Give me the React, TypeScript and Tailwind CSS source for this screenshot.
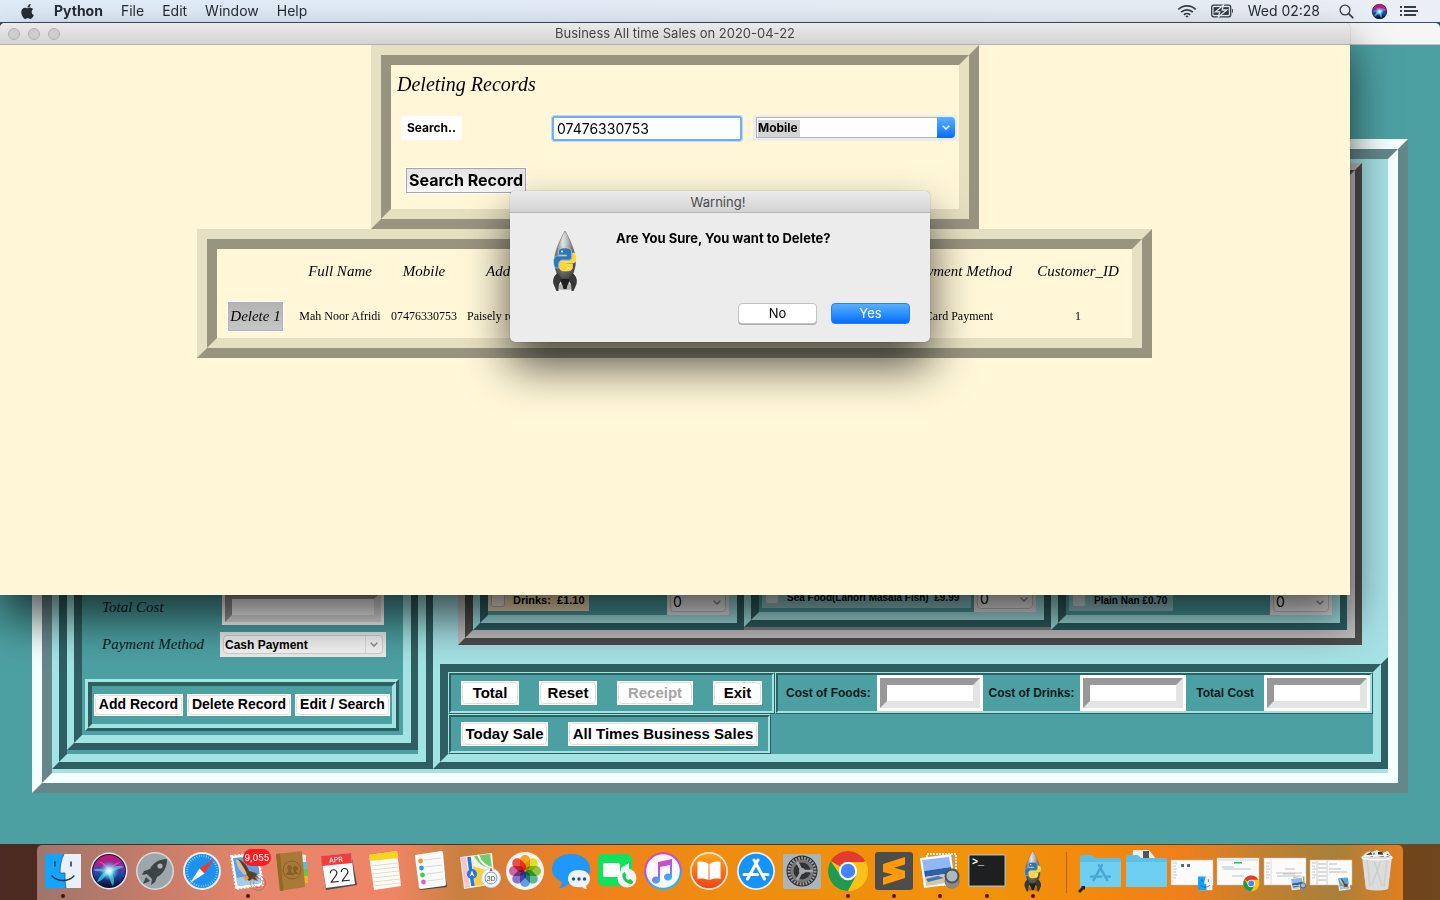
import React from "react";
import { FaApple } from "react-icons/fa";

/* ---------- raised frames ---------- */

type Kids = { children?: React.ReactNode; className?: string };

const CREAM_OUT = "border-t-[#e6e0c2] border-l-[#e6e0c2] border-b-[#999480] border-r-[#999480]";
const CREAM_IN = "border-t-[#999480] border-l-[#999480] border-b-[#e6e0c2] border-r-[#e6e0c2]";
const TEAL_OUT = "border-t-[#a4e3e4] border-l-[#a4e3e4] border-b-[#2e5f62] border-r-[#2e5f62]";
const TEAL_IN = "border-t-[#2e5f62] border-l-[#2e5f62] border-b-[#a4e3e4] border-r-[#a4e3e4]";
const GRAY_OUT = "border-t-[#c0c0c0] border-l-[#c0c0c0] border-b-[#4c4c4c] border-r-[#4c4c4c]";
const GRAY_IN = "border-t-[#4c4c4c] border-l-[#4c4c4c] border-b-[#c0c0c0] border-r-[#c0c0c0]";
const ICE_OUT = "border-t-[#f5ffff] border-l-[#f5ffff] border-b-[#65878a] border-r-[#65878a]";
const ICE_IN = "border-t-[#65878a] border-l-[#65878a] border-b-[#f5ffff] border-r-[#f5ffff]";

function Ridge({ outer, inner, className = "", children, body = "" }: Kids & { outer: string; inner: string; body?: string }) {
  return (
    <div className={`flex flex-col ${outer} ${className}`}>
      <div className={`flex-1 ${inner} ${body}`}>{children}</div>
    </div>
  );
}

function TealFrame({ className, body, children }: Kids & { body?: string }) {
  return (
    <Ridge outer={`border-[7px] ${TEAL_OUT}`} inner={`border-8 ${TEAL_IN} bg-[#4da0a2]`} className={className} body={body}>
      {children}
    </Ridge>
  );
}

const SCRIPT = "font-['Apple_Chancery','Liberation_Serif',serif] italic";
const UI = "font-['Inter',sans-serif]";

/* ---------- menu bar ---------- */

function SiriOrb() {
  return (
    <svg width="17" height="17" viewBox="0 0 38 38" aria-hidden="true">
      <SiriShape />
    </svg>
  );
}

function SiriShape() {
  return (
    <g>
      <defs>
        <linearGradient id="siriA" x1="0" y1="0" x2="0" y2="1">
          <stop offset="0" stopColor="#d0146e" />
          <stop offset=".35" stopColor="#8a2aa0" />
          <stop offset=".6" stopColor="#1d4aa8" />
          <stop offset="1" stopColor="#0b0d2c" />
        </linearGradient>
        <radialGradient id="siriB">
          <stop offset="0" stopColor="#ffffff" />
          <stop offset=".3" stopColor="#b9f4ff" stopOpacity=".9" />
          <stop offset="1" stopColor="#35c8e8" stopOpacity="0" />
        </radialGradient>
      </defs>
      <circle cx="19" cy="19" r="18.5" fill="#e8e8ee" />
      <circle cx="19" cy="19" r="17" fill="#17123a" />
      <circle cx="19" cy="19" r="16" fill="url(#siriA)" />
      <path d="M3 18c6-3 11 0 16 1 4-4 9-7 15-4-4 2-9 3-13 5 3 4 4 9 2 14-3-4-4-9-5-14-3 5-6 9-11 10 2-5 5-8 9-11-5 0-9 1-13-1z" fill="#38d5e0" opacity=".75" />
      <path d="M19 19c-3-5-8-9-12-9 5-1 10 2 12 9zM19 19c3-6 7-9 12-9-4 2-8 5-12 9z" fill="#ff4fa8" opacity=".8" />
      <circle cx="19" cy="19" r="10" fill="url(#siriB)" />
    </g>
  );
}

function MenuBar() {
  return (
    <header className={`flex h-[22px] shrink-0 items-center justify-between bg-linear-to-r from-[#dfecf8] to-[#ebeff5] pr-[22px] pl-[19px] text-sm text-[#252d36] ${UI}`}>
      <nav className="flex items-center gap-[18px]">
        <a href="#apple" aria-label="Apple menu"><FaApple size={17} /></a>
        <a href="#python" className="font-bold">Python</a>
        <a href="#file">File</a>
        <a href="#edit">Edit</a>
        <a href="#window">Window</a>
        <a href="#help">Help</a>
      </nav>
      <div className="flex items-center">
        <svg width="20" height="15" viewBox="0 0 22 16" fill="none" stroke="#353c45" strokeWidth="1.9" aria-label="Wi-Fi">
          <path d="M1.5 5.6a13.5 13.5 0 0 1 19 0M4.6 8.7a9.2 9.2 0 0 1 12.8 0M7.6 11.6a5 5 0 0 1 6.8 0" />
          <path d="M9.3 13.2a2.5 2.5 0 0 1 3.4 0L11 15z" fill="#353c45" stroke="none" />
        </svg>
        <svg className="ml-3.5" width="23" height="14" viewBox="0 0 23 14" aria-label="Battery">
          <rect x=".7" y="1.2" width="19" height="11.6" rx="2" fill="none" stroke="#353c45" strokeWidth="1.3" />
          <rect x="2.6" y="3.1" width="15.2" height="7.8" fill="#353c45" />
          <path d="M12.500 1 4.500 7.800h4.300L7.300 13 15.800 6h-4.600z" fill="#353c45" stroke="#e9eef5" strokeWidth="1.3" />
          <path d="M21 4.8c1.4.6 1.4 3.8 0 4.400z" fill="#353c45" />
        </svg>
        <span className="ml-3.5 whitespace-nowrap">Wed 02:28</span>
        <svg className="ml-[19px]" width="15" height="15" viewBox="0 0 15 15" fill="none" stroke="#353c45" strokeWidth="1.3" aria-label="Spotlight">
          <circle cx="6" cy="6" r="4.9" />
          <path d="M9.600 9.600 14.200 14.200" strokeWidth="1.7" />
        </svg>
        <span className="ml-[17px]"><SiriOrb /></span>
        <svg className="ml-3" width="18" height="12" viewBox="0 0 18 12" fill="#353c45" aria-label="Notification Centre">
          <path d="M0 1h2v2H0zM4 1h12v2H4zM0 5h2v2H0zM4 5h14v2H4zM0 9h2v2H0zM4 9h12v2H4z" />
        </svg>
      </div>
    </header>
  );
}

/* ---------- till window ---------- */

function TkButton({ children, className = "", disabled = false }: Kids & { disabled?: boolean }) {
  return (
    <button disabled={disabled} className={`flex bg-white p-px font-['Liberation_Sans',Arial,sans-serif] font-bold whitespace-nowrap ${disabled ? "text-[#a5a5a5]" : "text-black"} ${className}`}>
      <span className="flex-1 self-stretch rounded border border-[#dedede] text-center">{children}</span>
    </button>
  );
}

function Chevron({ color = "#8d8d8d" }: { color?: string }) {
  return (
    <svg width="8" height="5" viewBox="0 0 8 5" fill="none" stroke={color} strokeWidth="1.5" aria-hidden="true">
      <path d="M.7.7 4 4 7.3.7" />
    </svg>
  );
}

function Qty({ label }: { label: string }) {
  return (
    <div className="flex h-[26px] w-[62px] shrink-0 bg-[#ebebeb] p-[3px]">
      <div className="flex flex-1 items-center rounded-sm border border-[#c6c6c6] bg-[#f4f4f4] pr-1">
        <select aria-label={label} className="min-w-0 flex-1 appearance-none pl-0.5 font-['Inter',sans-serif] text-sm leading-4">
          <option>0</option>
        </select>
        <Chevron />
      </div>
    </div>
  );
}

function MenuItem({ name, tone, text }: { name: string; tone: string; text: string }) {
  return (
    <div className="flex items-end justify-between">
      <label className={`mb-1 flex h-[22px] items-center gap-2 pl-[3px] font-['Liberation_Sans',Arial,sans-serif] font-bold whitespace-pre ${tone} ${text}`}>
        <input type="checkbox" className="size-3.5 appearance-none rounded-[3px] border border-[#bdbdbd] bg-white/60" />
        {name}
      </label>
      <Qty label={name} />
    </div>
  );
}

const GROOVE = "border-[7px] border-t-[#989898] border-r-[#e4e4e4] border-b-[#e4e4e4] border-l-[#989898] bg-white";

function CostEntry({ id }: { id: string }) {
  return (
    <span className="flex w-[106px] shrink-0 bg-white p-[3px]">
      <input id={id} className={`h-[30px] min-w-0 flex-1 ${GROOVE}`} />
    </span>
  );
}

function Costs() {
  return (
    <Ridge outer={`border ${TEAL_OUT}`} inner={`border-2 ${TEAL_IN}`} className="h-[42px] flex-1" body="flex items-center justify-between gap-1 pl-2 font-['Liberation_Sans',Arial,sans-serif] text-xs font-bold text-[#0a1a1a]">
      <label htmlFor="foods" className="whitespace-nowrap">Cost of Foods:</label>
      <CostEntry id="foods" />
      <label htmlFor="drinks" className="whitespace-nowrap">Cost of Drinks:</label>
      <CostEntry id="drinks" />
      <label htmlFor="total" className="px-1 whitespace-nowrap">Total Cost</label>
      <CostEntry id="total" />
    </Ridge>
  );
}

function CustomerPane() {
  return (
    <TealFrame className="mb-1 w-[381px] shrink-0" body="flex flex-col">
      <TealFrame className="mb-1 flex-1" body="flex flex-col justify-end px-[3px] pb-1">
        <div className={`flex flex-col gap-[7px] pr-[14px] pl-[17px] text-[15px] text-[#0a1a1a] ${SCRIPT}`}>
          <div className="flex items-center justify-between">
            <label htmlFor="cost">Total Cost</label>
            <span className="mr-0.5 flex w-[162px] bg-white p-[3px]">
              <input id="cost" className={`h-[30px] min-w-0 flex-1 ${GROOVE}`} />
            </span>
          </div>
          <div className="flex items-center justify-between">
            <label htmlFor="method">Payment Method</label>
            <div className="flex h-[25px] w-[166px] bg-[#ebebeb] p-[3px] not-italic">
              <div className="flex flex-1 items-center rounded-sm border border-[#cfcfcf] bg-[#f4f4f4]">
                <select id="method" className="min-w-0 flex-1 appearance-none pl-px font-['Liberation_Sans',Arial,sans-serif] text-xs font-bold text-black">
                  <option>Cash Payment</option>
                </select>
                <span className="flex h-full w-[17px] items-center justify-center border-l border-[#dcdcdc]"><Chevron /></span>
              </div>
            </div>
          </div>
        </div>
        <Ridge outer={`border-[3px] ${TEAL_OUT}`} inner={`border-4 ${TEAL_IN}`} className="mt-[22px] mr-px h-[52px]" body="flex items-center justify-between px-0.5">
          <TkButton className="h-[22px] w-[89px] text-[14px] leading-[17px]">Add Record</TkButton>
          <TkButton className="h-[22px] w-[104px] text-[14px] leading-[17px]">Delete Record</TkButton>
          <TkButton className="h-[22px] w-[95px] text-[14px] leading-[17px]">Edit / Search</TkButton>
        </Ridge>
      </TealFrame>
    </TealFrame>
  );
}

function TillWindow() {
  return (
    <section aria-label="Till" className="mt-px flex flex-1 flex-col overflow-hidden rounded-t-[5px] bg-[#4da0a2]">
      <div className="h-[22px] border-b border-[#c4c4c4] bg-[#f6f6f6]" />
      <Ridge outer={`border-[10px] ${ICE_OUT}`} inner={`border-[10px] ${ICE_IN} bg-[#a6e1e6]`} className="mx-8 mt-[94px] mb-[51px] flex-1" body="flex">
        <CustomerPane />
        <div className="mb-1 flex min-w-0 flex-1 flex-col">
          <Ridge outer={`border-[7px] ${GRAY_OUT}`} inner={`border-8 ${GRAY_IN} bg-[#808080]`} className="mt-1 mr-[26px] mb-3 ml-[25px] flex-1" body="flex">
            <TealFrame className="w-[271px] shrink-0" body="flex flex-col justify-end">
              <MenuItem name="Drinks:  £1.10" tone="pr-1 bg-[#f5deb3]" text="text-[11px]" />
            </TealFrame>
            <TealFrame className="mb-[3px] w-[307px] shrink-0" body="flex flex-col justify-end">
              <MenuItem name="Sea Food(Lahori Masala Fish)  £9.99" tone="ml-[3px] pr-3 bg-[#8fc9cf]" text="text-[10px]" />
            </TealFrame>
            <TealFrame className="flex-1" body="flex flex-col justify-end">
              <MenuItem name="Plain Nan £0.70" tone="ml-[3px] pr-1.5 bg-[#8fc9cf]" text="text-[10px]" />
            </TealFrame>
          </Ridge>
          <TealFrame className="h-28">
            <div className="flex">
              <Ridge outer={`border ${TEAL_OUT}`} inner={`border-2 ${TEAL_IN}`} className="h-[42px] w-[327px] shrink-0" body="flex items-center justify-between px-[10px]">
                <TkButton className="h-6 w-[58px] text-[15px] leading-5">Total</TkButton>
                <TkButton className="h-6 w-[58px] text-[15px] leading-5">Reset</TkButton>
                <TkButton disabled className="h-6 w-[76px] text-[15px] leading-5">Receipt</TkButton>
                <TkButton className="h-6 w-[49px] text-[15px] leading-5">Exit</TkButton>
              </Ridge>
              <Costs />
            </div>
            <Ridge outer={`border ${TEAL_OUT}`} inner={`border-2 ${TEAL_IN}`} className="h-10 w-[323px]" body="flex items-center justify-between px-[10px]">
              <TkButton className="h-6 w-[87px] text-[15px] leading-5">Today Sale</TkButton>
              <TkButton className="h-6 w-[190px] text-[15px] leading-5">All Times Business Sales</TkButton>
            </Ridge>
          </TealFrame>
        </div>
      </Ridge>
    </section>
  );
}

/* ---------- sales window ---------- */

const SHADOW = "shadow-[0_24px_45px_rgba(0,0,0,0.66),0_0_1px_rgba(0,0,0,0.6)]";

function SearchPanel() {
  return (
    <Ridge outer={`border-[10px] ${CREAM_OUT}`} inner={`border-[10px] ${CREAM_IN}`} className="h-[184px] w-[608px]" body="pt-[6px] pr-0.5 pl-[6px]">
      <h1 className={`text-xl leading-[26px] ${SCRIPT}`}>Deleting Records</h1>
      <div className="mt-[18px] flex items-center">
        <label htmlFor="search" className={`ml-1 flex h-6 w-[61px] items-center justify-center bg-white text-xs font-bold ${UI}`}>Search..</label>
        <input
          id="search"
          defaultValue="07476330753"
          className={`ml-[90px] h-[25px] w-[190px] rounded-xs border-2 border-[#70b0f0] bg-white pl-[3px] text-sm outline-1 outline-[#b9dafb] ${UI}`}
        />
        <div className="ml-[11px] flex h-[26px] flex-1 bg-[#ececec] pt-0.5 pr-0.5 pb-[3px] pl-[3px]">
          <select
            aria-label="Search by"
            className={`min-w-0 flex-1 appearance-none border border-r-0 border-[#b4b4b4] bg-white bg-[linear-gradient(#d4d4d4,#d4d4d4)] bg-[size:42px_17px] bg-[position:1px_2px] bg-no-repeat pl-px text-[12px] font-bold text-black ${UI}`}
          >
            <option>Mobile</option>
          </select>
          <span className="flex w-[18px] items-center justify-center rounded-r-sm bg-linear-to-b from-[#58b0ff] to-[#006cff]">
            <Chevron color="#fff" />
          </span>
        </div>
      </div>
      <button className={`mt-[27px] ml-[9px] h-[25px] w-[120px] border border-[#a7a7a7] bg-linear-to-b from-[#e3e3e3] to-[#f8f8f8] text-base leading-[23px] font-bold whitespace-nowrap outline-1 outline-white ${UI}`}>
        Search Record
      </button>
    </Ridge>
  );
}

function Records() {
  return (
    <Ridge outer={`border-[10px] ${CREAM_OUT}`} inner={`border-[10px] ${CREAM_IN}`} className="mr-px h-[129px] w-[955px]">
      <table className="h-full w-full table-fixed text-center font-['Liberation_Serif',serif] text-xs">
        <colgroup>
          <col className="w-[77px]" />
          <col className="w-[92px]" />
          <col className="w-[76px]" />
          <col className="w-[88px]" />
          <col />
          <col className="w-[122px]" />
          <col className="w-[108px]" />
        </colgroup>
        <thead>
          <tr className={`h-[45px] text-[15px] whitespace-nowrap ${SCRIPT}`}>
            <th />
            <th className="font-normal">Full Name</th>
            <th className="font-normal">Mobile</th>
            <th className="pl-6 text-left font-normal">Address</th>
            <th />
            <th className="pr-1 font-normal">Payment Method</th>
            <th className="font-normal">Customer_ID</th>
          </tr>
        </thead>
        <tbody>
          <tr className="h-[44px] whitespace-nowrap">
            <td>
              <button className={`h-[29px] w-[55px] border border-[#b4b4b4] bg-linear-to-b from-[#b4b4b4] to-[#c6c6c6] text-[15px] leading-6 outline-1 outline-white ${SCRIPT}`}>Delete 1</button>
            </td>
            <td>Mah Noor Afridi</td>
            <td>07476330753</td>
            <td className="pl-[5px] text-left">Paisely road</td>
            <td />
            <td className="pr-2">Card Payment</td>
            <td>1</td>
          </tr>
        </tbody>
      </table>
    </Ridge>
  );
}

function RocketShape() {
  return (
    <g>
      <defs>
        <linearGradient id="hull" x1="0" x2="1">
          <stop offset="0" stopColor="#6c6c6c" />
          <stop offset=".4" stopColor="#e4e4e4" />
          <stop offset=".6" stopColor="#bdbdbd" />
          <stop offset="1" stopColor="#555" />
        </linearGradient>
        <linearGradient id="hullDark" x1="0" y1="0" x2="0" y2="1">
          <stop offset=".3" stopColor="#333" stopOpacity="0" />
          <stop offset="1" stopColor="#333" stopOpacity=".85" />
        </linearGradient>
      </defs>
      <ellipse cx="13" cy="57" rx="10" ry="3" fill="#000" opacity=".25" />
      <path d="M12.500 1C8 9 2 21 2 31c0 8 3 14 5 18h11c2-4 5-10 5-18C23 21 17 9 12.500 1z" fill="url(#hull)" stroke="#6a6a6a" strokeWidth=".6" />
      <path d="M12.500 1C8 9 2 21 2 31c0 8 3 14 5 18h11c2-4 5-10 5-18C23 21 17 9 12.500 1z" fill="url(#hullDark)" />
      <path d="M5 43c-4 3-5 7-4 11l3 7h2c0-5 0-8 4-11zM20 43c4 3 5 7 4 11l-3 7h-2c0-5 0-8-4-11z" fill="#383838" />
      <path d="M8 49h9l-1 5-1 1-1 4h-3l-1-4-1-1z" fill="#1e1e1e" />
      <path d="M13 18c-5 0-7 1-7 4v3h8v1H5c-3 0-4 3-4 6s1 6 3 6h2v-4c0-2 2-4 4-4h6c2 0 3-1 3-3v-5c0-3-2-4-6-4z" fill="#2d77b5" stroke="#d8e6f2" strokeWidth=".5" />
      <path d="M13 41c5 0 7-1 7-4v-3h-7v-1h8c2 0 3-3 3-5s-1-5-3-5h-1v4c0 2-2 4-4 4h-6c-2 0-3 1-3 3v3c0 3 2 4 6 4z" fill="#ffd629" stroke="#fff6c8" strokeWidth=".5" />
      <circle cx="9.500" cy="21.500" r="1" fill="#fff" />
      <circle cx="16" cy="38" r="1" fill="#fff" />
    </g>
  );
}

function WarningDialog() {
  return (
    <div role="alertdialog" aria-label="Warning!" className={`absolute top-[168px] left-1/2 -ml-[165px] flex h-[151px] w-[420px] flex-col overflow-hidden rounded-[5px] bg-[#ececec] ${SHADOW} ${UI}`}>
      <div className="h-[22px] border-b border-[#b6b6b6] bg-linear-to-b from-[#ebebeb] to-[#d3d3d3] pr-1 text-center text-[13px] leading-[22px] text-[#4a4a4a]">Warning!</div>
      <div className="flex flex-1 px-5 pt-[17px] pb-[18px]">
        <svg className="ml-[22px] shrink-0" width="27" height="62" viewBox="0 0 26 62" aria-label="Python Launcher"><RocketShape /></svg>
        <div className="ml-[37px] flex flex-1 flex-col justify-between">
          <p className="text-[13px] leading-4 font-bold whitespace-nowrap text-black">Are You Sure, You want to Delete?</p>
          <div className="flex justify-end gap-3.5 text-[13px]">
            <button className="h-[21px] w-[79px] rounded-[4px] border border-[#c2c2c2] bg-white leading-[19px] text-black shadow-[0_1px_0_#b0b0b0]">No</button>
            <button className="h-[21px] w-[79px] rounded-[4px] border border-[#2a80f0] bg-linear-to-b from-[#56b0ff] to-[#006cff] leading-[19px] text-white">Yes</button>
          </div>
        </div>
      </div>
    </div>
  );
}

function SalesWindow() {
  return (
    <section aria-label="Business sales" className={`absolute top-px left-0 flex h-[572px] w-[93.75%] flex-col rounded-t-[5px] bg-[#fff7d8] ${SHADOW}`}>
      <div className="flex h-[22px] shrink-0 items-center rounded-t-[5px] border-b border-[#b1b1b1] bg-linear-to-b from-[#ebebeb] to-[#d3d3d3] px-2">
        <div className="flex w-[52px] gap-2">
          <button aria-label="Close" className="size-3 rounded-full border border-[#b3b3b3] bg-[#cdcdcd]" />
          <button aria-label="Minimise" className="size-3 rounded-full border border-[#b3b3b3] bg-[#cdcdcd]" />
          <button aria-label="Zoom" className="size-3 rounded-full border border-[#b3b3b3] bg-[#cdcdcd]" />
        </div>
        <div className={`flex-1 pt-px pr-[52px] text-center text-[13px] text-[#444] ${UI}`}>Business All time Sales on 2020-04-22</div>
      </div>
      <div className="flex flex-1 flex-col items-center text-black">
        <SearchPanel />
        <Records />
      </div>
      <WarningDialog />
    </section>
  );
}

/* ---------- dock ---------- */

const C = { cx: 23, cy: 26 };

function FinderIcon() {
  return (
    <g>
      <path d="M5 9h36v34H5z" fill="#e9f0f8" />
      <path d="M5 9h19c-3 6-4 12-4 19h5c0 6 0 10 1 15H5z" fill="#13a4fb" />
      <path d="M24 9c-3 6-4 12-4 19h5c0 6 0 10 1 15" fill="none" stroke="#1a4c80" strokeWidth=".7" />
      <path d="M15 17v4M31 17v4" stroke="#16324d" strokeWidth="1.5" strokeLinecap="round" />
      <path d="M12 31c6 6 16 6 22 0" fill="none" stroke="#16324d" strokeWidth="1.4" strokeLinecap="round" />
    </g>
  );
}

function LaunchpadIcon() {
  return (
    <g>
      <circle {...C} r="19" fill="#d5dadc" />
      <circle {...C} r="17.5" fill="#9da6aa" />
      <path d="M35 14c-8 0-14 4-17 10l-6 2-2 4 5-1 5 5-1 6 4-3 2-5c6-3 10-9 10-18z" fill="#3d4448" />
      <circle cx="28" cy="21" r="2.600" fill="#aab1b4" />
      <path d="m14 32-3 7 7-3z" fill="#3d4448" />
    </g>
  );
}

function SafariIcon() {
  return (
    <g>
      <circle {...C} r="19" fill="#e9eef2" />
      <circle {...C} r="17" fill="#1b93ee" />
      <circle {...C} r="15" fill="none" stroke="#bfe2fb" strokeWidth="2" strokeDasharray=".6 1.8" />
      <path d="M35 14 20.500 23.500 25.500 28.500z" fill="#f3352f" />
      <path d="M11 38 20.500 23.500 25.500 28.500z" fill="#f7f7f7" />
    </g>
  );
}

function MailStamp() {
  return (
    <g>
      <path d="m6 11 27-3 5 32-27 4z" fill="#fafafa" stroke="#fff" strokeWidth="2" strokeDasharray="2 1.500" />
      <path d="m8 13 24-2 4 27-23 3z" fill="#5ba2e4" />
      <path d="m11 33 24-4 1 9-23 3z" fill="#a4cdf2" />
      <path d="M11 15c5-1 9 3 11 9l2 5-4 1c-5-3-8-8-9-15z" fill="#cdbfa6" />
      <path d="M13 14c5 2 9 6 11 12 4 1 7 2 10 4l3 1-3 2-4-1 3 4-6-2-3 2-4-4c2-1 2-3 1-5-2-4-5-9-8-13z" fill="#5e3d22" />
      <path d="m31 30 4-1 3 2-4 2z" fill="#fff" />
      <path d="m18 33 4-3 2 3-3 3z" fill="#e8a42c" />
    </g>
  );
}

function MailIcon() {
  return (
    <g>
      <MailStamp />
      <g fill="none" stroke="#8b5f52" strokeWidth="1" opacity=".55"><circle cx="33" cy="38" r="7.500" /><circle cx="33" cy="38" r="4.500" /></g>
      <rect x="18" y="4" width="28" height="17" rx="8.5" fill="#fb1b20" />
      <text x="32" y="16" textAnchor="middle" fontFamily="Inter" fontSize="9" fontWeight="500" fill="#fff">9,055</text>
    </g>
  );
}

function ContactsIcon() {
  return (
    <g>
      <path d="m30 9 5 1v8h-4z" fill="#eee" /><path d="m32 17 4 0v8h-4z" fill="#4fc3d8" /><path d="M32 24h5v7h-4z" fill="#6cc24a" /><path d="M33 31h4v7h-3z" fill="#f4b223" />
      <path d="M5 9 31 6l3 36-25 4z" fill="#a9793a" />
      <path d="m5 9 4-.5L12.500 45.500 9 46z" fill="#946829" />
      <circle cx="21" cy="25" r="9" fill="none" stroke="#8a6029" strokeWidth="1" />
      <path d="M15 30c0-3 3-2 2-5-2-4 1-6 3-4 2 1 1 3 0 5 0 2 3 1 3 4zM21 29c2 0 2-2 1-4-1-3 1-5 3-4 3 1 2 4 0 5 0 2 3 1 3 3z" fill="#8a6029" />
    </g>
  );
}

function CalendarIcon() {
  return (
    <g>
      <path d="M4 11 34 8l6 32-31 5z" fill="#4a4a4a" />
      <path d="m4 11 30-3 4 31-29 4z" fill="#fdfdfd" />
      <path d="m4 11 30-3 1 10-30 3z" fill="#ee3e3e" />
      <g transform="rotate(-6 21 26)">
        <text x="20" y="17" textAnchor="middle" fontFamily="Inter" fontSize="7" fill="#fff">APR</text>
        <text x="22" y="37" textAnchor="middle" fontFamily="Inter" fontSize="18" fontWeight="300" fill="#222">22</text>
      </g>
    </g>
  );
}

function NotesIcon() {
  return (
    <g>
      <path d="M6 10 34 6l4 35-27 4z" fill="#fcfcf4" />
      <path d="m6 10 28-4 1 7-28 3z" fill="#fdd21b" />
      <path d="m8 21 27-3M8.500 25l27-3M9 29l27-3M9.500 33l27-3M10 37l27-3M10.500 41l27-3" stroke="#cfcfc8" strokeWidth=".7" />
    </g>
  );
}

function RemindersIcon() {
  return (
    <g>
      <path d="M8 11 33 8l5 34-27 3z" fill="#444" />
      <path d="m6 10 26-4q2 0 2 2l3 31q0 2-2 2l-23 3q-2 0-2-2L6 12z" fill="#fbfbfb" />
      <path d="m15 15 17-2M16 22l17-2M17 29l17-2M18 36l16-2" stroke="#cfcfcf" strokeWidth=".8" />
      <circle cx="11.500" cy="16" r="2.400" fill="#f8922a" /><circle cx="12.500" cy="23" r="2.400" fill="#2b9bf4" /><circle cx="13.500" cy="30" r="2.400" fill="#3bcf4a" /><circle cx="14.500" cy="37" r="2.400" fill="#cf5df0" />
    </g>
  );
}

function MapsIcon() {
  return (
    <g>
      <path d="M4 12 36 8l3 31-31 5z" fill="#f4f1e6" />
      <path d="m18 11 16-2 2 14c-9 0-14-5-18-12z" fill="#6fce6b" />
      <path d="M22 10c3 8 8 12 15 13" fill="none" stroke="#fff" strokeWidth="2" />
      <path d="m5 13 5-1 4 30-5 1z" fill="#f4c6cb" />
      <path d="m17 21 12 4 2 14-12 2z" fill="#f8cf3c" />
      <path d="m13 12 2 16 2 13" fill="none" stroke="#2577d8" strokeWidth="3.500" />
      <circle cx="16" cy="29" r="5" fill="#1e78e0" /><path d="m16 25.500 2.500 6-2.500-1.500-2.500 1.500z" fill="#fff" />
      <circle cx="35" cy="33" r="9.5" fill="#f4f6f8" stroke="#c9d2da" /><circle cx="35" cy="33" r="6" fill="none" stroke="#5aa6c8" />
      <text x="35" y="35.500" textAnchor="middle" fontFamily="Inter" fontSize="6.500" fill="#444">3D</text>
      <path d="m35 23 1.500 3h-3z" fill="#f03a30" />
    </g>
  );
}

const PETALS = ["#f99b0b", "#e3dc0c", "#86c232", "#45b48c", "#4f95e0", "#8562c4", "#c9559a", "#f0392f"];

function PhotosIcon() {
  return (
    <g>
      <circle {...C} r="19" fill="#f3f3f1" />
      <g className="isolate">
        {PETALS.map((c, i) => (
          <rect key={c} className="mix-blend-multiply" x="18" y="10" width="10" height="15.5" rx="5" fill={c} opacity=".9" transform={`rotate(${i * 45} 23 26)`} />
        ))}
      </g>
    </g>
  );
}

function MessagesIcon() {
  return (
    <g>
      <path d="M23 9c11 0 19 6 19 15s-8 15-19 15l-3 0c-2 2-5 4-9 4 2-2 3-4 3-6-6-3-10-7-10-13C4 15 12 9 23 9z" fill="#1f97fb" />
      <path d="M31 25c7 0 11 4 11 9 0 3-2 5-4 7l1 3c-2 0-4-1-5-2-8 1-14-2-14-8s4-9 11-9z" fill="#eef4fb" />
      <g fill="#17539e"><circle cx="25.500" cy="34" r="1.700" /><circle cx="31" cy="34" r="1.700" /><circle cx="36.500" cy="34" r="1.700" /></g>
    </g>
  );
}

function FacetimeIcon() {
  return (
    <g>
      <rect x="4" y="9" width="34" height="32" rx="5" fill="#0fe35c" />
      <rect x="9" y="18" width="17" height="14" rx="2" fill="#fff" /><path d="m27 23 8-5v14l-8-5z" fill="#fff" />
      <circle cx="33" cy="33" r="9.5" fill="#f4f4f4" />
      <path d="M28.500 29c-1 5 4 10 9 10l2-2-3-3-2 1c-2-1-3-2-3-4l1-1-2-3z" fill="#17c94c" />
    </g>
  );
}

function ItunesIcon() {
  return (
    <g>
      <defs><linearGradient id="tune" x1="0" y1="0" x2=".4" y2="1"><stop offset="0" stopColor="#fb4a6e" /><stop offset=".5" stopColor="#b64ff0" /><stop offset="1" stopColor="#27b8f4" /></linearGradient></defs>
      <circle {...C} r="19" fill="url(#tune)" /><circle {...C} r="16.8" fill="#fbf7fb" />
      <path d="M18 17 32 14v18a4 3.500 0 1 1-2-3V20l-10 2v13a4 3.500 0 1 1-2-3z" fill="url(#tune)" />
    </g>
  );
}

function BooksIcon() {
  return (
    <g>
      <defs><linearGradient id="bk" x1="0" y1="0" x2="0" y2="1"><stop offset="0" stopColor="#fba51a" /><stop offset="1" stopColor="#ee4414" /></linearGradient></defs>
      <circle {...C} r="19" fill="#f6e6d8" /><circle {...C} r="17.3" fill="url(#bk)" />
      <path d="M22.500 19c-2-2-7-3-11-2v17c4-1 9 0 11 1zM23.500 19c2-2 7-3 11-2v17c-4-1-9 0-11 1z" fill="#fff" />
    </g>
  );
}

function AGlyph({ color }: { color: string }) {
  return <path d="M21 15 31.500 34M25 15 14.500 34M11 29.500h13.500M29.500 29.500H35" stroke={color} strokeWidth="3" strokeLinecap="round" fill="none" />;
}

function AppStoreIcon() {
  return <g><circle {...C} r="19" fill="#e8f1fa" /><circle {...C} r="17.3" fill="#1593f7" /><AGlyph color="#fff" /></g>;
}

function SettingsIcon() {
  return (
    <g>
      <rect x="4" y="9" width="38" height="35" rx="2" fill="#a9b4bb" />
      <circle {...C} r="15.5" fill="#2e3032" />
      <circle {...C} r="13" fill="none" stroke="#9b9ea0" strokeWidth="3" strokeDasharray="1.700 1.300" />
      <circle {...C} r="11.5" fill="#77797b" /><circle {...C} r="8.5" fill="#303234" />
      <path d="M23 26 18 17M23 26l-5 9M23 26h11" stroke="#a4a6a8" strokeWidth="2.600" /><circle {...C} r="3" fill="#a4a6a8" />
    </g>
  );
}

function ChromeIcon() {
  return (
    <g>
      <circle {...C} r="20" fill="#fbc116" />
      <path d="M23 26 5.700 16A20 20 0 0 1 40.300 16z" fill="#e53a30" />
      <path d="M5.700 16A20 20 0 0 0 23 46l8.500-15L23 26 14 28z" fill="#209a4e" />
      <path d="M23 17h17.700A20 20 0 0 1 23 46l8-15z" fill="#fbc116" />
      <circle {...C} r="9.2" fill="#fff" /><circle {...C} r="7.2" fill="#4285f4" />
    </g>
  );
}

function SublimeIcon() {
  return (
    <g>
      <rect x="4" y="7" width="38" height="38" rx="3" fill="#4d4d4d" />
      <path d="M34 12v7.500l-11 3.200 11 3V33l-22 7v-7.500l10-3L12 27v-8z" fill="#ff9a0a" />
    </g>
  );
}

function PreviewIcon() {
  return (
    <g>
      <path d="M10 9h29v31H10z" fill="#c49a54" stroke="#f1e6c8" strokeWidth="2" strokeDasharray="2 1" />
      <path d="m3 13 31-4 4 30-31 4z" fill="#fafafa" />
      <path d="m5 15 27-3 2 10-27 4z" fill="#8fb9f4" /><path d="m7 26 27-4 1 6-27 4z" fill="#2b5fa8" /><path d="m8 32 27-4 1 9-27 4z" fill="#d4c5ae" /><path d="m9 34 12-3 6 2-16 4z" fill="#3c78b8" />
      <circle cx="35" cy="36" r="7.500" fill="#77777a" /><path d="M28 32h14l-1 9q-6 4-12 0z" fill="#8a8a8c" /><circle cx="35" cy="31" r="6.500" fill="#a9b9c6" stroke="#505054" strokeWidth="2" />
    </g>
  );
}

function TerminalIcon() {
  return (
    <g>
      <rect x="4" y="9" width="38" height="33" rx="2" fill="#b5b5a8" /><rect x="5.5" y="10.5" width="35" height="30" fill="#1e1f21" />
      <text x="8" y="20" fontFamily="Liberation Mono" fontSize="10" fontWeight="700" fill="#fff">&gt;_</text>
    </g>
  );
}

function PythonIcon() {
  return <g transform="translate(14 5) scale(.7 .68)"><RocketShape /></g>;
}

function FolderIcon({ app = false, papers = false }: { app?: boolean; papers?: boolean }) {
  return (
    <g>
      {papers && <path d="m10 5 16 0 7 9v8H9z" fill="#eee" />}
      {papers && <path d="M20 6h6v8h-6z" fill="#555" />}
      <path d="M3 12q0-2 2-2h9q2 0 3 2l1 1h24q2 0 2 2v26H3z" fill="#5cbfe6" />
      <path d="M3 17h41v25H3z" fill="#6fcff2" />
      {app && <g transform="translate(5 8) scale(.8)"><AGlyph color="#4aa7d4" /></g>}
      {app && <path d="m1 46 4-4-1-1h4v4l-1-1-4 4z" fill="#222" />}
    </g>
  );
}

function WindowIcon({ children, y = 15 }: { children?: React.ReactNode; y?: number }) {
  return (
    <g>
      <rect x="2" y={y} width="42" height={40 - y} fill="#fbfbfb" stroke="#c8bfae" strokeWidth=".5" />
      {children}
    </g>
  );
}

function Mini({ children }: { children: React.ReactNode }) {
  return <g transform="translate(27 28) scale(.4)">{children}</g>;
}

function TrashIcon() {
  return (
    <g>
      <path d="M9 11q4-6 9-4l5-2 5 3 6-2 4 6-14 5z" fill="#e6e6e6" /><path d="m12 10 5-3 2 5zM24 7l4 0 2 5-6-1zM33 9l4 2-5 2z" fill="#333" /><path d="m20 7 2 4-4 0z" fill="#3aa7a0" />
      <path d="M8 12h30l-4 32q-11 3-22 0z" fill="#dcdcdc" />
      <path d="m13 14 3 28M33 14l-3 28M20 15l8 26M27 15l-9 25" stroke="#cbcbcb" strokeWidth="1.500" opacity=".8" />
      <ellipse cx="23" cy="12.500" rx="15" ry="2.300" fill="none" stroke="#f5f5f5" strokeWidth="1.500" />
    </g>
  );
}

type App = { name: string; art: React.ReactNode; open?: boolean };

const APPS: App[] = [
  { name: "Finder", art: <FinderIcon />, open: true },
  { name: "Siri", art: <g transform="translate(4 7)"><SiriShape /></g> },
  { name: "Launchpad", art: <LaunchpadIcon /> },
  { name: "Safari", art: <SafariIcon /> },
  { name: "Mail", art: <MailIcon />, open: true },
  { name: "Contacts", art: <ContactsIcon /> },
  { name: "Calendar", art: <CalendarIcon /> },
  { name: "Notes", art: <NotesIcon /> },
  { name: "Reminders", art: <RemindersIcon /> },
  { name: "Maps", art: <MapsIcon /> },
  { name: "Photos", art: <PhotosIcon /> },
  { name: "Messages", art: <MessagesIcon /> },
  { name: "FaceTime", art: <FacetimeIcon /> },
  { name: "iTunes", art: <ItunesIcon /> },
  { name: "Books", art: <BooksIcon /> },
  { name: "App Store", art: <AppStoreIcon /> },
  { name: "System Preferences", art: <SettingsIcon /> },
  { name: "Chrome", art: <ChromeIcon />, open: true },
  { name: "Sublime Text", art: <SublimeIcon />, open: true },
  { name: "Preview", art: <PreviewIcon />, open: true },
  { name: "Terminal", art: <TerminalIcon />, open: true },
  { name: "Python Launcher", art: <PythonIcon />, open: true },
];

const LINES = <path d="M4 18h4M4 21h3M4 24h4M4 27h3M4 30h4M4 33h3" stroke="#bbb" strokeWidth=".8" />;

const STACKS: App[] = [
  { name: "Applications", art: <FolderIcon app /> },
  { name: "Documents", art: <FolderIcon papers /> },
  { name: "Finder window", art: <WindowIcon>{LINES}<path d="M12 19h3v3h-3zM18 19h3v3h-3z" fill="#5a6a6a" /><Mini><FinderIcon /></Mini></WindowIcon> },
  { name: "Chrome window", art: <WindowIcon y={13}><path d="M3 14h40v2H3z" fill="#dfe7f4" /><path d="M19 17h8v1.500h-8z" fill="#2eb85c" /><path d="M7 22h12M8 24h28M17 31h12" stroke="#9db7d8" strokeWidth=".8" /><Mini><ChromeIcon /></Mini></WindowIcon> },
  { name: "Preview window", art: <WindowIcon y={13}>{LINES}<path d="M9 14v26" stroke="#ddd" /><path d="M23 24h10M14 28h26M21 29h12M15 31h24" stroke="#aaa" strokeWidth=".7" /><Mini><PreviewIcon /></Mini></WindowIcon> },
  { name: "Mail window", art: <WindowIcon>{LINES}<path d="M9 16v24M19 16v24" stroke="#ccc" /><path d="M10 19h8M10 23h8M10 27h8M10 31h8M10 35h8M21 19h8M21 24h12M21 27h18" stroke="#aaa" strokeWidth=".8" /><Mini><MailStamp /></Mini></WindowIcon> },
  { name: "Bin", art: <TrashIcon /> },
];

function DockItem({ name, art, open }: App) {
  return (
    <button aria-label={name} className="flex min-w-0 flex-1 justify-center">
      <svg width="46" height="55" viewBox="0 0 46 55" className="shrink-0">
        {art}
        {open && <circle cx="23" cy="51" r="2" fill="#4d0d08" />}
      </svg>
    </button>
  );
}

function Dock() {
  return (
    <footer className="flex h-14 shrink-0 bg-linear-to-r from-[#4a2a22] via-[#6a2c18] to-[#70461c] px-[37px] pt-px">
      <div className="flex flex-1 rounded-t-[5px] bg-[linear-gradient(90deg,#9d766b_0%,#c47c69_8%,#e5856a_16%,#f08566_26%,#c9803f_31%,#dd7f35_35%,#f0821c_41%,#ee8d10_50%,#f0930a_70%,#f3880e_78%,#ee7f1c_84%,#c08030_90%,#a8803a_95%,#e07f22_100%)] px-[3px]">
        {APPS.map((a) => <DockItem key={a.name} {...a} />)}
        <div className="flex w-[21px] shrink-0 justify-center py-[7px]"><div className="w-px bg-[#b5620c]" /></div>
        {STACKS.map((a) => <DockItem key={a.name} {...a} />)}
      </div>
    </footer>
  );
}

export default function App() {
  return (
    <div className="flex h-screen flex-col overflow-hidden bg-[#3b5068]">
      <MenuBar />
      <main className="relative flex flex-1 flex-col">
        <TillWindow />
        <SalesWindow />
      </main>
      <Dock />
    </div>
  );
}
